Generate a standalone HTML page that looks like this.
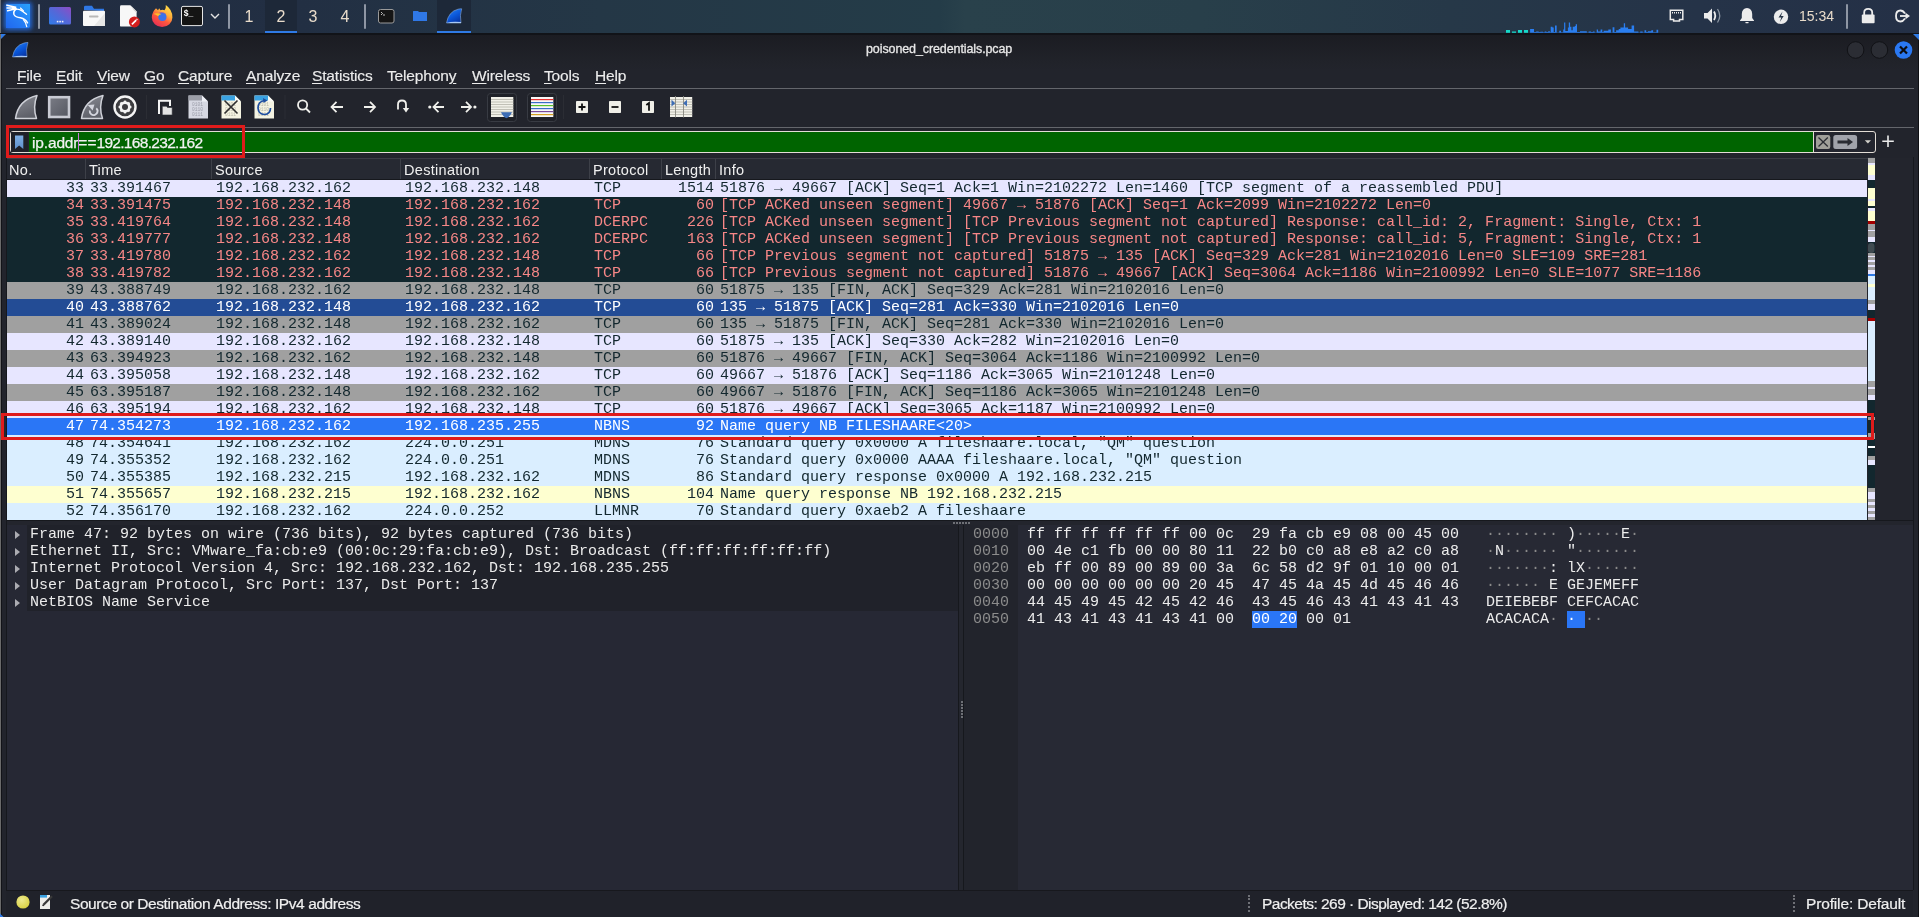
<!DOCTYPE html>
<html><head><meta charset="utf-8"><title>poisoned_credentials.pcap</title>
<style>
html,body{margin:0;padding:0;}
body{will-change:transform;width:1919px;height:917px;overflow:hidden;position:relative;background:#111318;font-family:"Liberation Sans",sans-serif;color:#e6e6e6;}
.abs{position:absolute;}
/* taskbar */
#taskbar{position:absolute;left:0;top:0;width:1919px;height:33px;background:linear-gradient(90deg,#212c41 0px,#222f43 300px,#243746 600px,#243c48 940px,#29414b 965px,#283f4a 1200px,#263848 1450px,#253348 1700px,#243046 1919px);}
#tbline{position:absolute;left:0;top:33px;width:1919px;height:2px;background:#111318;}
.tsep{position:absolute;top:4px;width:2px;height:25px;background:#8d96a3;border-radius:1px;}
.ws{position:absolute;top:0;height:33px;width:32px;text-align:center;font-size:16px;line-height:33px;color:#e9dccb;}
.ws.act{background:#1d2838;}
.ws.act::after{content:"";position:absolute;left:0;bottom:0;width:100%;height:3px;background:#2f7ae5;}
/* window */
#win{position:absolute;left:0;top:35px;width:1918px;height:882px;background:linear-gradient(180deg,#1b1c22 0px,#21232a 28px,#22242c 36px);border-radius:4px 4px 0 0;}
#wborderL{position:absolute;left:0;top:34px;width:1px;height:883px;background:#6a6a6a;}
#wborderL1{position:absolute;left:1px;top:35px;width:1px;height:882px;background:#121318;}
#wborderL2{position:absolute;left:6px;top:157px;width:1px;height:733px;background:#16181d;}
#wborderR{position:absolute;left:1918px;top:35px;width:1px;height:882px;background:#0f1014;}
#pframeR{position:absolute;left:1913px;top:157px;width:1px;height:733px;background:#16181d;}
#title{position:absolute;left:866px;top:34px;height:32px;font-size:12.5px;letter-spacing:-0.1px;line-height:31px;-webkit-text-stroke:0.3px #e8e8e8;color:#e8e8e8;white-space:pre;}
.wbtn{position:absolute;top:41px;width:17px;height:17px;border-radius:50%;background:#2c2f37;border:1px solid #121318;box-sizing:border-box;}
/* menu */
.menu{position:absolute;top:66px;height:22px;font-size:15.5px;letter-spacing:-0.15px;-webkit-text-stroke:0.15px #ececec;line-height:20px;color:#ececec;}
.menu u{text-decoration:underline;text-decoration-thickness:1px;text-underline-offset:2px;}
.hline{position:absolute;left:6px;width:1908px;height:1px;background:#64666c;}
/* toolbar */
.tbtn{position:absolute;}
.tsep2{position:absolute;top:95px;width:1px;height:24px;background:#2c2e35;}
/* filter */
#fframe{position:absolute;left:10px;top:131px;width:1866px;height:22px;border:1px solid #e3ddd6;border-radius:3px;box-sizing:border-box;background:#23252e;}
#fgreen{position:absolute;left:29px;top:132px;width:1784px;height:20px;background:#006400;}
#ftext{position:absolute;left:32px;top:133px;-webkit-text-stroke:0.25px #f2f2f2;height:20px;font-size:15.5px;letter-spacing:-0.56px;line-height:20px;color:#f2f2f2;white-space:pre;}
#fdiv{position:absolute;left:1813px;top:132px;width:1px;height:20px;background:#e3ddd6;}
/* packet list */
#plhdr{position:absolute;left:7px;top:158px;width:1906px;height:21px;background:#262932;border-top:1px solid #3a3d45;box-sizing:border-box;}
#plhdrline{position:absolute;left:7px;top:179px;width:1860px;height:1px;background:#16181d;}
.hcol{position:absolute;top:160px;height:21px;font-size:14.5px;letter-spacing:0.3px;line-height:21px;color:#f0f0f0;}
.hsep{position:absolute;top:159px;width:1px;height:20px;background:#3d4048;}
#plist{position:absolute;left:7px;top:180px;width:1860px;height:340px;overflow:hidden;background:#daeeff;}
.row{position:absolute;left:0;width:1860px;height:17px;font-family:"Liberation Mono",monospace;font-size:15px;line-height:17px;white-space:pre;color:#12272e;}
.row span{position:absolute;top:0;}
.cno{right:1783px;}
.ct{left:83px;}
.cs{left:209px;}
.cd{left:398px;}
.cp{left:587px;}
.cl{right:1153px;}
.ci{left:713px;}
.tcp{background:#e7e6ff;}
.bad{background:#12272e;color:#f78787;}
.fin{background:#a0a0a0;}
.sel2{background:#234c95;color:#ffffff;}
.sel{background:#2a76f6;color:#ffffff;}
.udp{background:#daeeff;}
.smb{background:#feffd0;}
#minimap{position:absolute;left:1867px;top:157px;width:8px;height:363px;background:#12272e;}
#minimap div{position:absolute;left:0;width:8px;}
#plright{position:absolute;left:1875px;top:158px;width:38px;height:362px;background:#23252d;}
/* splitter */
#split{position:absolute;left:7px;top:520px;width:1906px;height:6px;background:#23252d;border-top:1px solid #16181d;border-bottom:1px solid #16181d;box-sizing:border-box;}
/* detail */
#detail{position:absolute;left:7px;top:525px;width:951px;height:365px;background:#262834;}
#dtop{position:absolute;left:20px;top:0;width:931px;height:86px;background:#20222a;}
.drow{position:absolute;margin-top:1px;left:0;width:951px;height:17px;font-family:"Liberation Mono",monospace;font-size:15px;line-height:17px;white-space:pre;color:#ebebeb;}
.darr{position:absolute;left:8px;top:4.5px;width:0;height:0;border-left:5px solid #acacb2;border-top:4px solid transparent;border-bottom:4px solid transparent;}
.dtxt{position:absolute;left:23px;top:0;}
/* hex */
#hex{position:absolute;left:958px;top:525px;width:955px;height:365px;background:#272934;}
#hexgap{position:absolute;left:0;top:0;width:6px;height:365px;background:#24262e;border-left:1px solid #16181d;border-right:1px solid #16181d;box-sizing:border-box;}
#hexoff{position:absolute;left:6px;top:0;width:54px;height:365px;background:#22242c;}
.hrow{position:absolute;margin-top:1px;left:0;width:955px;height:17px;font-family:"Liberation Mono",monospace;font-size:15px;line-height:17px;white-space:pre;color:#ececec;}
.hrow span{position:absolute;top:0;}
.hoff{left:15px;color:#8c8c8c;}
.hx1{left:69px;}
.hx2{left:294px;}
.ha1{left:528px;}
.ha2{left:609px;}
.hrow i{font-style:normal;color:#8a8a8a;}
.hrow b{font-weight:normal;}
.hl{background:#2a76f6;color:#fff;}
.hl i{color:#fff !important;}
/* status */
#status{position:absolute;left:6px;top:890px;width:1907px;height:27px;background:#20222a;border-top:1px solid #17181d;box-sizing:border-box;}
.stxt{position:absolute;top:894px;-webkit-text-stroke:0.2px #f0f0f0;height:20px;font-size:15.5px;line-height:20px;color:#f0f0f0;white-space:pre;}
.sdots{position:absolute;top:895px;width:0;height:17px;border-left:2px dotted #6f7177;}
/* annotations */
.red{position:absolute;border:3px solid #e01b1b;box-sizing:border-box;}

</style></head>
<body>
<div id="taskbar"></div>
<div id="tbline"></div>
<svg class="abs" style="left:0;top:0" width="1919" height="33" viewBox="0 0 1919 33">
<defs>
<linearGradient id="kg" x1="0" y1="1" x2="1" y2="0"><stop offset="0" stop-color="#2068f0"/><stop offset="0.5" stop-color="#2680f6"/><stop offset="1" stop-color="#28a2fc"/></linearGradient>
<linearGradient id="dg" x1="0" y1="1" x2="1" y2="0"><stop offset="0" stop-color="#2f7cea"/><stop offset="0.5" stop-color="#5468d8"/><stop offset="1" stop-color="#8e4cc4"/></linearGradient>
<radialGradient id="ffg" cx="0.6" cy="0.25" r="0.8"><stop offset="0" stop-color="#ffe14a"/><stop offset="0.45" stop-color="#ff8a2a"/><stop offset="1" stop-color="#e8244a"/></radialGradient>
<filter id="glow" x="-50%" y="-50%" width="200%" height="200%"><feGaussianBlur stdDeviation="2.2"/></filter>
</defs>
<rect x="0" y="0" width="1" height="33" fill="#6f737a"/>
<!-- kali -->
<rect x="4" y="2" width="28" height="28" rx="4" fill="#2477ff" opacity="0.75" filter="url(#glow)"/>
<path d="M6 4 H30 V26 Q30 28 28 28 H6 Z" fill="url(#kg)"/>
<g fill="none" stroke="#ffffff" stroke-linecap="round">
<path d="M6.8 5.2 L15.8 7.2 M7 8 L15.5 8 M7.6 10.8 L15.8 8.8" stroke-width="1.4"/>
<path d="M16.2 9 Q13 11 14 14.5 Q15.5 17.5 20.5 17.8 Q25.5 18.8 27.5 22.8" stroke-width="1.5"/>
<path d="M23.5 19.8 Q26.2 22.5 26.7 26.5" stroke-width="1.3"/>
<path d="M15.8 9.2 Q19.5 8.8 22.5 11.3 L26.5 14.3" stroke-width="1.4"/>
<path d="M20.5 8 L23.5 11" stroke-width="1.1"/>
</g>
<rect x="38" y="4" width="2" height="25" rx="1" fill="#8e96a4"/>
<!-- desktop -->
<rect x="49" y="7" width="22" height="17.5" rx="1.5" fill="url(#dg)"/>
<rect x="56.8" y="20.8" width="1.6" height="1.6" fill="#f0f0fa"/><rect x="59.3" y="20.8" width="1.6" height="1.6" fill="#f0f0fa"/><rect x="61.8" y="20.8" width="1.6" height="1.6" fill="#f0f0fa"/>
<!-- folder -->
<path d="M84 10 V7 Q84 5.7 85.5 5.7 H92 L94 8.7 H104 V11 Z" fill="#2f78e6"/>
<rect x="83" y="10.8" width="22" height="15.2" rx="1" fill="#f8f8f8"/>
<path d="M94 26 L105 13 V26 Z" fill="#e6e6e6"/>
<rect x="89" y="15.6" width="9.5" height="1.8" rx="0.9" fill="#b8b8b8"/>
<!-- text editor -->
<path d="M120 6.5 Q120 5.3 121.3 5.3 H130.3 L136.6 11.6 V25.4 Q136.6 26.6 135.4 26.6 H121.3 Q120 26.6 120 25.4 Z" fill="#f7f7f7"/>
<path d="M130.6 5.3 L136.6 11.3 V13 Q133 10 130.6 5.3 Z" fill="#d0d0d0"/>
<circle cx="134.4" cy="21.9" r="5.5" fill="#d41d1d"/>
<path d="M131.9 24.4 L136.2 20.1" stroke="#ffffff" stroke-width="1.7"/><path d="M136.6 19.7 L137.3 19" stroke="#ffffff" stroke-width="1.5"/>
<!-- firefox -->
<defs><linearGradient id="ffg2" x1="0.8" y1="0" x2="0.2" y2="1"><stop offset="0" stop-color="#ffe04a"/><stop offset="0.35" stop-color="#ffae3a"/><stop offset="0.6" stop-color="#ff5a3c"/><stop offset="1" stop-color="#e42a58"/></linearGradient></defs>
<path d="M151.8 17.5 A10.3 9.5 0 0 0 172.4 17.5 Q172.5 9.5 165.8 5 Q166.2 8.8 164.5 10.3 Q162.5 9.5 160.5 10.2 L159.2 8.3 L158 10.2 L156 8.3 Q152 12 151.8 17.5 Z" fill="url(#ffg2)"/>
<circle cx="162.4" cy="17" r="4.1" fill="#3a72ea"/>
<path d="M158.4 12.8 Q161 11.8 163.6 12.6 Q165.5 13.3 166.2 14.5 Q164 12.9 161.8 13.3 Z" fill="#6a4ad0" opacity="0.8"/>
<path d="M153.2 14 Q156.5 12.5 161.2 14.2 Q158.8 14.6 158 16.2 Q156.2 14.6 153.2 14 Z" fill="#ffc02a"/>
<!-- terminal -->
<rect x="181.5" y="6.4" width="21" height="19.2" rx="1.5" fill="#141414" stroke="#e6e6e6" stroke-width="1"/>
<text x="183.8" y="15.6" font-family="Liberation Sans" font-weight="bold" font-size="8.5" fill="#ffffff">$_</text>
<path d="M211 14 L215 18 L219 14" fill="none" stroke="#e4e4e4" stroke-width="1.4"/>
<rect x="228" y="4" width="2" height="25" rx="1" fill="#8e96a4"/>
<!-- workspaces -->
<rect x="265" y="0" width="32" height="33" fill="#1d2838"/>
<rect x="265" y="31" width="32" height="2" fill="#2f7ae5"/>
<rect x="364" y="4" width="2" height="25" rx="1" fill="#8e96a4"/>
<!-- window buttons -->
<rect x="378.5" y="9.5" width="15.5" height="13.5" rx="2" fill="#151515" stroke="#9a9a9a" stroke-width="1"/>
<path d="M381 12 L382.5 13.5 L381 15 M383 15 H385" stroke="#e8e8e8" stroke-width="0.8" fill="none"/>
<path d="M413 11.5 Q413 11 413.5 11 H418 L419 12 H427 V21 H413 Z" fill="#2f78e6"/>
<rect x="437" y="0" width="34" height="33" fill="#1d2838"/>
<rect x="437" y="31" width="34" height="2" fill="#2f7ae5"/>
<!-- wireshark fin -->
<defs><linearGradient id="wsg" x1="0" y1="0" x2="0.6" y2="1"><stop offset="0" stop-color="#2a86f5"/><stop offset="0.6" stop-color="#0a56d8"/><stop offset="1" stop-color="#0838a8"/></linearGradient></defs>
<path d="M446.5 23 Q448.5 11.5 458 9.2 Q460.5 8.6 461.7 8.8 Q459.5 15 461 23 Z" fill="url(#wsg)" stroke="#9cc0f0" stroke-width="0.5"/>
<path d="M446.6 23 Q452 21 461 22 V23 Z" fill="#a8c8f4"/>
<!-- network graph -->
<g fill="#16d9c9">
<rect x="1506" y="30" width="4" height="2.8"/><rect x="1512" y="31.5" width="4" height="1.3"/><rect x="1518" y="30" width="4" height="2.8"/><rect x="1524" y="30" width="4" height="2.8"/>
</g>
<path fill="#2a7ef0" d="M1530.1 32.8V28.9H1534.0V32.8ZM1534.0 32.8V31.9H1536.1V32.8ZM1536.1 32.8V31.5H1538.7V32.8ZM1538.7 32.8V32.1H1540.4V32.8ZM1540.4 32.8V31.8H1543.0V32.8ZM1543.0 32.8V32.3H1544.7V32.8ZM1544.7 32.8V31.6H1546.4V32.8ZM1546.4 32.8V32.1H1548.2V32.8ZM1548.2 32.8V31.3H1549.9V32.8ZM1549.9 32.8V32.3H1550.7V32.8ZM1550.7 32.8V26.8H1552.5V32.8ZM1552.5 32.8V27.6H1553.7V32.8ZM1553.7 32.8V31.9H1555.0V32.8ZM1555.0 32.8V25.5H1556.7V32.8ZM1556.7 32.8V32.4H1559.3V32.8ZM1559.3 32.8V30.7H1561.0V32.8ZM1561.0 32.8V32.3H1563.2V32.8ZM1563.2 32.8V29.4H1564.1V32.8ZM1564.1 32.8V22.5H1565.3V32.8ZM1565.3 32.8V31.1H1567.9V32.8ZM1567.9 32.8V27.6H1568.8V32.8ZM1568.8 32.8V22.5H1570.1V32.8ZM1570.1 32.8V26.8H1571.4V32.8ZM1571.4 32.8V30.2H1572.7V32.8ZM1572.7 32.8V26.8H1574.8V32.8ZM1574.8 32.8V25.9H1575.7V32.8ZM1575.7 32.8V24.2H1577.0V32.8ZM1577.0 32.8V31.9H1580.0V32.8ZM1580.0 32.8V31.3H1586.8V32.8ZM1586.8 32.8V32.4H1588.6V32.8ZM1588.6 32.8V31.5H1591.1V32.8ZM1591.1 32.8V32.1H1592.9V32.8ZM1592.9 32.8V31.5H1594.6V32.8ZM1594.6 32.8V32.4H1596.7V32.8ZM1596.7 32.8V29.4H1598.0V32.8ZM1598.0 32.8V31.5H1600.6V32.8ZM1600.6 32.8V29.4H1602.3V32.8ZM1602.3 32.8V32.1H1603.6V32.8ZM1603.6 32.8V30.7H1608.3V32.8ZM1608.3 32.8V29.4H1610.9V32.8ZM1610.9 32.8V32.4H1612.6V32.8ZM1612.6 32.8V27.2H1614.4V32.8ZM1614.4 32.8V32.1H1616.1V32.8ZM1616.1 32.8V30.2H1618.7V32.8ZM1618.7 32.8V28.9H1620.4V32.8ZM1620.4 32.8V27.6H1623.8V32.8ZM1623.8 32.8V23.3H1625.1V32.8ZM1625.1 32.8V27.6H1628.1V32.8ZM1628.1 32.8V28.9H1631.6V32.8ZM1631.6 32.8V25.5H1634.1V32.8ZM1634.1 32.8V31.5H1635.9V32.8ZM1635.9 32.8V31.5H1638.4V32.8ZM1638.4 32.8V32.4H1640.2V32.8ZM1640.2 32.8V31.5H1642.7V32.8ZM1642.7 32.8V32.4H1644.5V32.8ZM1644.5 32.8V30.2H1646.2V32.8ZM1646.2 32.8V31.9H1647.9V32.8ZM1647.9 32.8V31.3H1651.3V32.8ZM1651.3 32.8V30.2H1653.1V32.8ZM1653.1 32.8V32.3H1656.5V32.8ZM1656.5 32.8V29.8H1658.2V32.8Z"/>
<!-- tray -->
<g fill="none" stroke="#ececec" stroke-width="1.5">
<path d="M1670.3 10.2 H1682.8 V19.5 H1679.5 V21 H1673.6 V19.5 H1670.3 Z"/>
</g>
<path d="M1672.5 12 V13.5 M1674.5 12 V13.5 M1676.5 12 V13.5 M1678.5 12 V13.5 M1680.5 12 V13.5" stroke="#ececec" stroke-width="1"/>
<path d="M1704 13 H1707.5 L1712 8.5 V23 L1707.5 18.5 H1704 Z" fill="#ececec"/>
<path d="M1714 11.5 Q1716.5 15.7 1714 20" fill="none" stroke="#ececec" stroke-width="1.8"/>
<path d="M1717.5 9 Q1722 15.7 1717.5 22.5" fill="none" stroke="#8c96a2" stroke-width="1.3"/>
<path d="M1747 8 Q1742 8.5 1741.8 14 V18 L1740 20.5 V21 H1754 V20.5 L1752.2 18 V14 Q1752 8.5 1747 8 Z" fill="#ececec"/>
<rect x="1745.3" y="22" width="3.4" height="1.2" rx="0.6" fill="#ececec"/>
<circle cx="1781" cy="16.8" r="7.2" fill="#ececec"/>
<path d="M1782.5 11.5 L1778.5 17.5 H1781.3 L1779.8 22 L1783.7 16 H1781 Z" fill="#263446"/>
<rect x="1846" y="4" width="2" height="25" rx="1" fill="#8e96a4"/>
<path d="M1864.2 15 V12.5 Q1864.2 8.8 1868.2 8.8 Q1872.2 8.8 1872.2 12.5 V15" fill="none" stroke="#ececec" stroke-width="1.8"/>
<rect x="1861.8" y="14.5" width="12.8" height="8.7" rx="1" fill="#ececec"/>
<path d="M1905 13.5 Q1903 10.5 1900.5 10.5 Q1896 10.5 1896 16 Q1896 21.5 1900.5 21.5 Q1903 21.5 1905 18.5" fill="none" stroke="#ececec" stroke-width="1.8"/>
<path d="M1900 16 H1906.5" stroke="#ececec" stroke-width="1.8"/>
<path d="M1905.5 12.8 L1910 16 L1905.5 19.2 Z" fill="#ececec"/>
</svg>

<div class="ws" style="left:233px">1</div>
<div class="ws" style="left:265px">2</div>
<div class="ws" style="left:297px">3</div>
<div class="ws" style="left:329px">4</div>
<div class="abs" style="left:1799px;top:5px;font-size:14px;line-height:22px;color:#e9dccb;">15:34</div>

<div id="win"></div>
<div id="wborderL"></div>
<div id="wborderL1"></div>
<div id="wborderL2"></div>
<div id="wborderR"></div>
<div id="pframeR"></div>
<div id="title">poisoned_credentials.pcap</div>

<div class="menu" style="left:17px"><u>F</u>ile</div>
<div class="menu" style="left:56px"><u>E</u>dit</div>
<div class="menu" style="left:97px"><u>V</u>iew</div>
<div class="menu" style="left:144px"><u>G</u>o</div>
<div class="menu" style="left:178px"><u>C</u>apture</div>
<div class="menu" style="left:246px"><u>A</u>nalyze</div>
<div class="menu" style="left:312px"><u>S</u>tatistics</div>
<div class="menu" style="left:387px">Telephon<u>y</u></div>
<div class="menu" style="left:472px"><u>W</u>ireless</div>
<div class="menu" style="left:544px"><u>T</u>ools</div>
<div class="menu" style="left:595px"><u>H</u>elp</div>
<div class="hline" style="top:88px"></div>
<div class="hline" style="top:127px"></div>
<svg class="abs" style="left:0;top:88px" width="1919" height="40" viewBox="0 88 1919 40">
<defs>
<linearGradient id="fing" x1="0" y1="0" x2="0.3" y2="1"><stop offset="0" stop-color="#8a8c94"/><stop offset="1" stop-color="#5e6069"/></linearGradient>
<linearGradient id="sqg" x1="0" y1="0" x2="1" y2="1"><stop offset="0" stop-color="#7a7c85"/><stop offset="1" stop-color="#555862"/></linearGradient>
</defs>
<!-- fin 1 -->
<path d="M15.5 118.5 Q18 100 37 95.5 Q32.5 107 36.5 118.5 Z" fill="url(#fing)" stroke="#cfd1d8" stroke-width="1.5" stroke-linejoin="round"/>
<!-- square -->
<rect x="49.2" y="97.2" width="19.8" height="19.8" fill="url(#sqg)" stroke="#c9cbd4" stroke-width="2.6"/>
<!-- fin 3 -->
<path d="M81.5 118.5 Q84 100 103 95.5 Q98.5 107 102.5 118.5 Z" fill="url(#fing)" stroke="#cfd1d8" stroke-width="1.5" stroke-linejoin="round"/>
<path d="M96.3 108.3 A3.9 3.9 0 1 1 89.8 110.5" fill="none" stroke="#d4d6de" stroke-width="1.9"/>
<path d="M87.8 105 L94.5 104.6 L92.6 110.6 Z" fill="#d4d6de"/>
<!-- gear -->
<circle cx="125" cy="107" r="10.5" fill="#3c3c3f" stroke="#f4f4f4" stroke-width="2.4"/>
<g fill="#f4f4f4">
<circle cx="125" cy="107" r="5.7"/>
<rect x="123.9" y="100.6" width="2.2" height="2.4" transform="rotate(0 125 107)"/><rect x="123.9" y="100.6" width="2.2" height="2.4" transform="rotate(45 125 107)"/><rect x="123.9" y="100.6" width="2.2" height="2.4" transform="rotate(90 125 107)"/><rect x="123.9" y="100.6" width="2.2" height="2.4" transform="rotate(135 125 107)"/><rect x="123.9" y="100.6" width="2.2" height="2.4" transform="rotate(180 125 107)"/><rect x="123.9" y="100.6" width="2.2" height="2.4" transform="rotate(225 125 107)"/><rect x="123.9" y="100.6" width="2.2" height="2.4" transform="rotate(270 125 107)"/><rect x="123.9" y="100.6" width="2.2" height="2.4" transform="rotate(315 125 107)"/>
</g>
<circle cx="125" cy="107" r="3" fill="#3c3c3f"/>
<rect x="146" y="95" width="1" height="24" fill="#2b2d34"/>
<!-- open -->
<path d="M159 114 V100.8 H170 V106" fill="none" stroke="#f4f4f4" stroke-width="2"/>
<path d="M162.3 106.2 H166.5 L167.5 107.5 H172.2 V115 H162.3 Z" fill="#e4e4e4" stroke="#2a2c33" stroke-width="0.6"/>
<!-- file 0101 -->
<path d="M188.5 95.5 H202 L208 101.5 V118.5 H188.5 Z" fill="#d6d8e2"/>
<path d="M188.5 95.5 H202 L204 97.5 V100.5 H188.5 Z" fill="#9c9ea8"/>
<path d="M202 95.5 V101.5 H208 Z" fill="#eef0f6"/>
<text x="192" y="106" font-family="Liberation Mono" font-size="4.6" fill="#9a9ca8">0101</text>
<text x="192" y="111" font-family="Liberation Mono" font-size="4.6" fill="#9a9ca8">0110</text>
<text x="192" y="116" font-family="Liberation Mono" font-size="4.6" fill="#9a9ca8">0111</text>
<!-- file X -->
<path d="M221.5 95.5 H235 L241 101.5 V118.5 H221.5 Z" fill="#f4f3e2"/>
<path d="M221.5 95.5 H235 L237 97.5 V100.5 H221.5 Z" fill="#3aa2e2"/>
<path d="M235 95.5 V101.5 H241 Z" fill="#fbfbf6"/>
<text x="225" y="106" font-family="Liberation Mono" font-size="4.6" fill="#b8b8a8">0101</text>
<text x="225" y="111" font-family="Liberation Mono" font-size="4.6" fill="#b8b8a8">0110</text>
<text x="225" y="116" font-family="Liberation Mono" font-size="4.6" fill="#b8b8a8">0111</text>
<path d="M224.5 100.5 L237.5 113.5 M237.5 100.5 L224.5 113.5" stroke="#2e2e2e" stroke-width="1.6"/>
<!-- file reload -->
<path d="M254.5 95.5 H268 L274 101.5 V118.5 H254.5 Z" fill="#f4f3e2"/>
<path d="M254.5 95.5 H268 L270 97.5 V100.5 H254.5 Z" fill="#3aa2e2"/>
<path d="M268 95.5 V101.5 H274 Z" fill="#fbfbf6"/>
<text x="258" y="106" font-family="Liberation Mono" font-size="4.6" fill="#b8b8a8">0101</text>
<text x="258" y="111" font-family="Liberation Mono" font-size="4.6" fill="#b8b8a8">0110</text>
<text x="258" y="116" font-family="Liberation Mono" font-size="4.6" fill="#b8b8a8">0111</text>
<path d="M264.5 100.5 Q258 101.5 258 108 Q258.5 114.5 264.5 114.5 Q270.5 114 270.5 108" fill="none" stroke="#1e4ea0" stroke-width="1.7"/>
<path d="M263 98 L267.5 100.5 L263.5 103 Z" fill="#1e4ea0"/>
<rect x="284.5" y="95" width="1" height="24" fill="#2b2d34"/>
<!-- nav -->
<g fill="none" stroke="#f0f0ec" stroke-width="1.8" stroke-linecap="butt">
<circle cx="302.6" cy="105" r="4.6"/>
<path d="M306 108.5 L310 112.5"/>
<path d="M336.5 101.8 L331.5 107 L336.5 112.2 M332 107 H343"/>
<path d="M370 101.8 L375 107 L370 112.2 M374.5 107 H364"/>
<path d="M398 109.5 V104.5 Q398 100.5 402 100.5 Q406 100.5 406 104.5 V108"/>
<path d="M438.5 101.8 L433.5 107 L438.5 112.2 M434 107 H444"/>
<path d="M466 101.8 L471 107 L466 112.2 M470.5 107 H461"/>
</g>
<path d="M402.8 108 L409.2 108 L406 112.5 Z" fill="#f0f0ec"/>
<circle cx="429.8" cy="107" r="1.6" fill="#f0f0ec"/>
<circle cx="474.9" cy="107" r="1.6" fill="#f0f0ec"/>
<!-- toggle buttons -->
<rect x="487.5" y="93.5" width="29" height="28" rx="3" fill="#1f2128" stroke="#383b43" stroke-width="1"/>
<rect x="491" y="97" width="22.3" height="20" fill="#f1f0e8"/>
<g stroke="#b5b4a8" stroke-width="0.8">
<path d="M491 99.5 H513.3 M491 102 H513.3 M491 104.5 H513.3 M491 107 H513.3 M491 109.5 H513.3 M491 112 H513.3 M491 114.5 H513.3"/>
</g>
<path d="M501 112.3 H512 Q510 117 506.5 118.3 Q503 117 501 112.3 Z" fill="#3d6db5"/>
<rect x="527.5" y="93.5" width="29" height="28" rx="3" fill="#1f2128" stroke="#383b43" stroke-width="1"/>
<rect x="531" y="97" width="22.3" height="20" fill="#f8f8f8"/>
<rect x="531" y="99" width="22.3" height="1.2" fill="#e83030"/>
<rect x="531" y="102" width="22.3" height="1.2" fill="#3a6ec8"/>
<rect x="531" y="105" width="22.3" height="1.2" fill="#5ac02a"/>
<rect x="531" y="108" width="22.3" height="1.2" fill="#3a6ec8"/>
<rect x="531" y="111" width="22.3" height="1.2" fill="#7a4a9a"/>
<rect x="531" y="114" width="22.3" height="1.2" fill="#d4a020"/>
<rect x="563" y="95" width="1" height="24" fill="#2b2d34"/>
<!-- zoom -->
<rect x="576" y="101" width="12" height="12" rx="0.8" fill="#f0efe8"/>
<path d="M582 103.5 V110.5 M578.5 107 H585.5" stroke="#111" stroke-width="1.8"/>
<rect x="609" y="101" width="12" height="12" rx="0.8" fill="#f0efe8"/>
<path d="M611.5 107 H618.5" stroke="#111" stroke-width="1.8"/>
<rect x="642" y="101" width="12" height="12" rx="0.8" fill="#f0efe8"/>
<path d="M646.3 105 L649 103 V110.8" stroke="#111" stroke-width="1.8" fill="none"/>
<!-- resize cols -->
<rect x="670" y="97" width="22.2" height="20" fill="#f1f0e8"/>
<g stroke="#b5b4a8" stroke-width="0.8">
<path d="M670 99.5 H692.2 M670 102 H692.2 M670 104.5 H692.2 M670 107 H692.2 M670 109.5 H692.2 M670 112 H692.2 M670 114.5 H692.2"/>
</g>
<path d="M675.5 96 V117.5 M683.5 96 V117.5" stroke="#888880" stroke-width="0.9"/>
<path d="M671.5 99.8 L675.3 103.2 L671.5 106.6 Z" fill="#3d6db5"/>
<path d="M687 99.8 L683.2 103.2 L687 106.6 Z" fill="#3d6db5"/>
</svg>


<!-- filter -->
<div id="fframe"></div>
<div class="abs" style="left:11px;top:132px;width:17px;height:20px;background:#1f2129;"></div>
<div id="fgreen"></div>
<div id="fdiv"></div>
<div id="ftext"><span style="letter-spacing:-0.15px">ip.addr</span><span style="letter-spacing:0">==</span><span style="letter-spacing:-0.69px">192.168.232.162</span></div>
<div class="abs" style="left:78px;top:133px;width:1px;height:18px;background:#c77ad8;"></div>

<!-- packet list header -->
<div id="plhdr"></div>
<div class="hcol" style="left:9px">No.</div>
<div class="hsep" style="left:85px"></div>
<div class="hcol" style="left:89px">Time</div>
<div class="hsep" style="left:211px"></div>
<div class="hcol" style="left:215px">Source</div>
<div class="hsep" style="left:400px"></div>
<div class="hcol" style="left:404px">Destination</div>
<div class="hsep" style="left:589px"></div>
<div class="hcol" style="left:593px">Protocol</div>
<div class="hsep" style="left:661px"></div>
<div class="hcol" style="left:665px">Length</div>
<div class="hsep" style="left:715px"></div>
<div class="hcol" style="left:719px">Info</div>
<div id="plhdrline"></div>
<div id="plist">
<div class="row tcp" style="top:0px"><span class="cno">33</span><span class="ct">33.391467</span><span class="cs">192.168.232.162</span><span class="cd">192.168.232.148</span><span class="cp">TCP</span><span class="cl">1514</span><span class="ci">51876 → 49667 [ACK] Seq=1 Ack=1 Win=2102272 Len=1460 [TCP segment of a reassembled PDU]</span></div>
<div class="row bad" style="top:17px"><span class="cno">34</span><span class="ct">33.391475</span><span class="cs">192.168.232.148</span><span class="cd">192.168.232.162</span><span class="cp">TCP</span><span class="cl">60</span><span class="ci">[TCP ACKed unseen segment] 49667 → 51876 [ACK] Seq=1 Ack=2099 Win=2102272 Len=0</span></div>
<div class="row bad" style="top:34px"><span class="cno">35</span><span class="ct">33.419764</span><span class="cs">192.168.232.148</span><span class="cd">192.168.232.162</span><span class="cp">DCERPC</span><span class="cl">226</span><span class="ci">[TCP ACKed unseen segment] [TCP Previous segment not captured] Response: call_id: 2, Fragment: Single, Ctx: 1</span></div>
<div class="row bad" style="top:51px"><span class="cno">36</span><span class="ct">33.419777</span><span class="cs">192.168.232.148</span><span class="cd">192.168.232.162</span><span class="cp">DCERPC</span><span class="cl">163</span><span class="ci">[TCP ACKed unseen segment] [TCP Previous segment not captured] Response: call_id: 5, Fragment: Single, Ctx: 1</span></div>
<div class="row bad" style="top:68px"><span class="cno">37</span><span class="ct">33.419780</span><span class="cs">192.168.232.162</span><span class="cd">192.168.232.148</span><span class="cp">TCP</span><span class="cl">66</span><span class="ci">[TCP Previous segment not captured] 51875 → 135 [ACK] Seq=329 Ack=281 Win=2102016 Len=0 SLE=109 SRE=281</span></div>
<div class="row bad" style="top:85px"><span class="cno">38</span><span class="ct">33.419782</span><span class="cs">192.168.232.162</span><span class="cd">192.168.232.148</span><span class="cp">TCP</span><span class="cl">66</span><span class="ci">[TCP Previous segment not captured] 51876 → 49667 [ACK] Seq=3064 Ack=1186 Win=2100992 Len=0 SLE=1077 SRE=1186</span></div>
<div class="row fin" style="top:102px"><span class="cno">39</span><span class="ct">43.388749</span><span class="cs">192.168.232.162</span><span class="cd">192.168.232.148</span><span class="cp">TCP</span><span class="cl">60</span><span class="ci">51875 → 135 [FIN, ACK] Seq=329 Ack=281 Win=2102016 Len=0</span></div>
<div class="row sel2" style="top:119px"><span class="cno">40</span><span class="ct">43.388762</span><span class="cs">192.168.232.148</span><span class="cd">192.168.232.162</span><span class="cp">TCP</span><span class="cl">60</span><span class="ci">135 → 51875 [ACK] Seq=281 Ack=330 Win=2102016 Len=0</span></div>
<div class="row fin" style="top:136px"><span class="cno">41</span><span class="ct">43.389024</span><span class="cs">192.168.232.148</span><span class="cd">192.168.232.162</span><span class="cp">TCP</span><span class="cl">60</span><span class="ci">135 → 51875 [FIN, ACK] Seq=281 Ack=330 Win=2102016 Len=0</span></div>
<div class="row tcp" style="top:153px"><span class="cno">42</span><span class="ct">43.389140</span><span class="cs">192.168.232.162</span><span class="cd">192.168.232.148</span><span class="cp">TCP</span><span class="cl">60</span><span class="ci">51875 → 135 [ACK] Seq=330 Ack=282 Win=2102016 Len=0</span></div>
<div class="row fin" style="top:170px"><span class="cno">43</span><span class="ct">63.394923</span><span class="cs">192.168.232.162</span><span class="cd">192.168.232.148</span><span class="cp">TCP</span><span class="cl">60</span><span class="ci">51876 → 49667 [FIN, ACK] Seq=3064 Ack=1186 Win=2100992 Len=0</span></div>
<div class="row tcp" style="top:187px"><span class="cno">44</span><span class="ct">63.395058</span><span class="cs">192.168.232.148</span><span class="cd">192.168.232.162</span><span class="cp">TCP</span><span class="cl">60</span><span class="ci">49667 → 51876 [ACK] Seq=1186 Ack=3065 Win=2101248 Len=0</span></div>
<div class="row fin" style="top:204px"><span class="cno">45</span><span class="ct">63.395187</span><span class="cs">192.168.232.148</span><span class="cd">192.168.232.162</span><span class="cp">TCP</span><span class="cl">60</span><span class="ci">49667 → 51876 [FIN, ACK] Seq=1186 Ack=3065 Win=2101248 Len=0</span></div>
<div class="row tcp" style="top:221px"><span class="cno">46</span><span class="ct">63.395194</span><span class="cs">192.168.232.162</span><span class="cd">192.168.232.148</span><span class="cp">TCP</span><span class="cl">60</span><span class="ci">51876 → 49667 [ACK] Seq=3065 Ack=1187 Win=2100992 Len=0</span></div>
<div class="row sel" style="top:238px"><span class="cno">47</span><span class="ct">74.354273</span><span class="cs">192.168.232.162</span><span class="cd">192.168.235.255</span><span class="cp">NBNS</span><span class="cl">92</span><span class="ci">Name query NB FILESHAARE&lt;20&gt;</span></div>
<div class="row udp" style="top:255px"><span class="cno">48</span><span class="ct">74.354641</span><span class="cs">192.168.232.162</span><span class="cd">224.0.0.251</span><span class="cp">MDNS</span><span class="cl">76</span><span class="ci">Standard query 0x0000 A fileshaare.local, &quot;QM&quot; question</span></div>
<div class="row udp" style="top:272px"><span class="cno">49</span><span class="ct">74.355352</span><span class="cs">192.168.232.162</span><span class="cd">224.0.0.251</span><span class="cp">MDNS</span><span class="cl">76</span><span class="ci">Standard query 0x0000 AAAA fileshaare.local, &quot;QM&quot; question</span></div>
<div class="row udp" style="top:289px"><span class="cno">50</span><span class="ct">74.355385</span><span class="cs">192.168.232.215</span><span class="cd">192.168.232.162</span><span class="cp">MDNS</span><span class="cl">86</span><span class="ci">Standard query response 0x0000 A 192.168.232.215</span></div>
<div class="row smb" style="top:306px"><span class="cno">51</span><span class="ct">74.355657</span><span class="cs">192.168.232.215</span><span class="cd">192.168.232.162</span><span class="cp">NBNS</span><span class="cl">104</span><span class="ci">Name query response NB 192.168.232.215</span></div>
<div class="row udp" style="top:323px"><span class="cno">52</span><span class="ct">74.356170</span><span class="cs">192.168.232.162</span><span class="cd">224.0.0.252</span><span class="cp">LLMNR</span><span class="cl">70</span><span class="ci">Standard query 0xaeb2 A fileshaare</span></div>
</div>
<div id="plright"></div>

<div id="split"></div>
<div id="detail"><div id="dtop"></div>
<div class="drow" style="top:0px"><span class="darr"></span><span class="dtxt">Frame 47: 92 bytes on wire (736 bits), 92 bytes captured (736 bits)</span></div>
<div class="drow" style="top:17px"><span class="darr"></span><span class="dtxt">Ethernet II, Src: VMware_fa:cb:e9 (00:0c:29:fa:cb:e9), Dst: Broadcast (ff:ff:ff:ff:ff:ff)</span></div>
<div class="drow" style="top:34px"><span class="darr"></span><span class="dtxt">Internet Protocol Version 4, Src: 192.168.232.162, Dst: 192.168.235.255</span></div>
<div class="drow" style="top:51px"><span class="darr"></span><span class="dtxt">User Datagram Protocol, Src Port: 137, Dst Port: 137</span></div>
<div class="drow" style="top:68px"><span class="darr"></span><span class="dtxt">NetBIOS Name Service</span></div>
</div>
<div id="hex"><div id="hexgap"></div><div id="hexoff"></div>
<div class="hrow" style="top:0px"><span class="hoff">0000</span><span class="hx1">ff ff ff ff ff ff 00 0c</span><span class="hx2">29 fa cb e9 08 00 45 00</span><span class="ha1"><i>·</i><i>·</i><i>·</i><i>·</i><i>·</i><i>·</i><i>·</i><i>·</i></span><span class="ha2">)<i>·</i><i>·</i><i>·</i><i>·</i><i>·</i>E<i>·</i></span></div>
<div class="hrow" style="top:17px"><span class="hoff">0010</span><span class="hx1">00 4e c1 fb 00 00 80 11</span><span class="hx2">22 b0 c0 a8 e8 a2 c0 a8</span><span class="ha1"><i>·</i>N<i>·</i><i>·</i><i>·</i><i>·</i><i>·</i><i>·</i></span><span class="ha2">&quot;<i>·</i><i>·</i><i>·</i><i>·</i><i>·</i><i>·</i><i>·</i></span></div>
<div class="hrow" style="top:34px"><span class="hoff">0020</span><span class="hx1">eb ff 00 89 00 89 00 3a</span><span class="hx2">6c 58 d2 9f 01 10 00 01</span><span class="ha1"><i>·</i><i>·</i><i>·</i><i>·</i><i>·</i><i>·</i><i>·</i>:</span><span class="ha2">lX<i>·</i><i>·</i><i>·</i><i>·</i><i>·</i><i>·</i></span></div>
<div class="hrow" style="top:51px"><span class="hoff">0030</span><span class="hx1">00 00 00 00 00 00 20 45</span><span class="hx2">47 45 4a 45 4d 45 46 46</span><span class="ha1"><i>·</i><i>·</i><i>·</i><i>·</i><i>·</i><i>·</i> E</span><span class="ha2">GEJEMEFF</span></div>
<div class="hrow" style="top:68px"><span class="hoff">0040</span><span class="hx1">44 45 49 45 42 45 42 46</span><span class="hx2">43 45 46 43 41 43 41 43</span><span class="ha1">DEIEBEBF</span><span class="ha2">CEFCACAC</span></div>
<div class="hrow" style="top:85px"><span class="hoff">0050</span><span class="hx1">41 43 41 43 41 43 41 00</span><span class="hx2"><b class="hl">00 20</b> 00 01</span><span class="ha1">ACACACA<i>·</i></span><span class="ha2"><b class="hl"><i>·</i> </b><i>·</i><i>·</i></span></div>
</div>

<div id="status"></div>
<div class="stxt" style="left:70px;letter-spacing:-0.42px">Source or Destination Address: IPv4 address</div>
<div class="sdots" style="left:1248px"></div>
<div class="stxt" style="left:1262px;letter-spacing:-0.53px">Packets: 269 · Displayed: 142 (52.8%)</div>
<div class="sdots" style="left:1793px"></div>
<div class="stxt" style="left:1806px;letter-spacing:-0.15px">Profile: Default</div>

<svg class="abs" style="left:0;top:0" width="1919" height="917" viewBox="0 0 1919 917">
<defs><linearGradient id="wsg2" x1="0" y1="0" x2="0.6" y2="1"><stop offset="0" stop-color="#2a86f5"/><stop offset="0.6" stop-color="#0a56d8"/><stop offset="1" stop-color="#0838a8"/></linearGradient>
<linearGradient id="bmg" x1="0" y1="0" x2="0" y2="1"><stop offset="0" stop-color="#7fb0e6"/><stop offset="1" stop-color="#5f90cc"/></linearGradient></defs>
<!-- corner accents -->
<path d="M1 34 H6 L1 39 Z" fill="#2f7ae5"/>
<path d="M1913 34 H1919 V40 Z" fill="#2f7ae5"/>
<path d="M0 913.5 L3.5 917 H0 Z" fill="#2f7ae5"/>
<!-- title icon -->
<path d="M12.5 57 Q14.5 45.5 24 43 Q26.5 42.3 28 42.5 Q25.5 49 27 57 Z" fill="url(#wsg2)" stroke="#9cc0f0" stroke-width="0.5"/>
<path d="M12.6 57 Q18 55 27 56 V57 Z" fill="#a8c8f4"/>
<!-- window buttons -->
<circle cx="1855.6" cy="50" r="8.3" fill="#2b2d34" stroke="#111216" stroke-width="1"/>
<circle cx="1879.4" cy="50" r="8.3" fill="#2b2d34" stroke="#111216" stroke-width="1"/>
<circle cx="1903.5" cy="50" r="8.8" fill="#2a78f2"/>
<path d="M1900 46.5 L1907 53.5 M1907 46.5 L1900 53.5" stroke="#0d0d10" stroke-width="2.2"/>
<!-- bookmark -->
<path d="M15 135.5 H23.3 V149 L19.15 145.5 L15 149 Z" fill="url(#bmg)"/>
<!-- filter right buttons -->
<rect x="1816" y="135" width="14.3" height="14" rx="2.2" fill="#a09f99"/>
<path d="M1818.5 137.5 L1827.8 146.5 M1827.8 137.5 L1818.5 146.5" stroke="#2b2d33" stroke-width="1.3"/>
<rect x="1833.3" y="135" width="23.8" height="14" rx="2.5" fill="#a1a3ab"/>
<path d="M1837.5 140.5 H1847.5 V138 L1853 142 L1847.5 146 V143.5 H1837.5 Z" fill="#2a2c33"/>
<path d="M1864.8 140.2 H1871 L1867.9 143.5 Z" fill="#d4d2cc"/>
<path d="M1888 135.5 V147 M1882.3 141.2 H1893.8" stroke="#ececec" stroke-width="1.6"/>
<!-- status icons -->
<defs><radialGradient id="yg" cx="0.4" cy="0.35" r="0.7"><stop offset="0" stop-color="#eeea90"/><stop offset="1" stop-color="#d8d040"/></radialGradient></defs><circle cx="23" cy="902" r="6.6" fill="url(#yg)"/>
<rect x="40" y="895" width="10" height="14" fill="#eeeeea"/>
<rect x="40" y="895" width="7" height="2.6" fill="#3aa2e2"/>
<path d="M43.5 904.8 L52 896.3" stroke="#3a3a3a" stroke-width="2.3"/><path d="M42.6 905.7 L43.6 904.7" stroke="#111" stroke-width="1.6"/>
<!-- splitter dots -->
<g fill="#6e7076">
<rect x="953" y="522" width="2" height="2"/><rect x="956" y="522" width="2" height="2"/><rect x="959" y="522" width="2" height="2"/><rect x="962" y="522" width="2" height="2"/><rect x="965" y="522" width="2" height="2"/><rect x="968" y="522" width="2" height="2"/>
</g>
<g fill="#6e7076">
<rect x="961" y="701" width="2" height="2"/><rect x="961" y="704" width="2" height="2"/><rect x="961" y="707" width="2" height="2"/><rect x="961" y="710" width="2" height="2"/><rect x="961" y="713" width="2" height="2"/><rect x="961" y="716" width="2" height="2"/>
</g>
<rect x="1868" y="157" width="7" height="1" fill="#2b2d35"/><rect x="1868" y="158" width="7" height="5" fill="#a0a0a0"/><rect x="1868" y="163" width="7" height="2" fill="#e7e6ff"/><rect x="1868" y="165" width="7" height="10" fill="#feffd0"/><rect x="1868" y="175" width="7" height="5" fill="#e7e6ff"/><rect x="1868" y="180" width="7" height="8" fill="#12272e"/><rect x="1868" y="188" width="7" height="11" fill="#feffd0"/><rect x="1868" y="199" width="7" height="2" fill="#e7e6ff"/><rect x="1868" y="201" width="7" height="5" fill="#feffd0"/><rect x="1868" y="206" width="7" height="2" fill="#12272e"/><rect x="1868" y="208" width="7" height="3" fill="#e7e6ff"/><rect x="1868" y="211" width="7" height="10" fill="#feffd0"/><rect x="1868" y="221" width="7" height="3" fill="#a40000"/><rect x="1868" y="224" width="7" height="6" fill="#a0a0a0"/><rect x="1868" y="230" width="7" height="1" fill="#e7e6ff"/><rect x="1868" y="231" width="7" height="6" fill="#a0a0a0"/><rect x="1868" y="237" width="7" height="5" fill="#e7e6ff"/><rect x="1868" y="242" width="7" height="11" fill="#12272e"/><rect x="1868" y="253" width="7" height="3" fill="#a0a0a0"/><rect x="1868" y="256" width="7" height="1" fill="#e7e6ff"/><rect x="1868" y="257" width="7" height="3" fill="#a0a0a0"/><rect x="1868" y="260" width="7" height="2" fill="#e7e6ff"/><rect x="1868" y="262" width="7" height="3" fill="#a0a0a0"/><rect x="1868" y="265" width="7" height="2" fill="#e7e6ff"/><rect x="1868" y="267" width="7" height="3" fill="#a0a0a0"/><rect x="1868" y="270" width="7" height="4" fill="#e7e6ff"/><rect x="1868" y="274" width="7" height="2" fill="#2f7ae5"/><rect x="1868" y="276" width="7" height="8" fill="#daeeff"/><rect x="1868" y="284" width="7" height="3" fill="#feffd0"/><rect x="1868" y="287" width="7" height="13" fill="#daeeff"/><rect x="1868" y="300" width="7" height="4" fill="#a0a0a0"/><rect x="1868" y="304" width="7" height="6" fill="#e7e6ff"/><rect x="1868" y="310" width="7" height="8" fill="#12272e"/><rect x="1868" y="318" width="7" height="3" fill="#a40000"/><rect x="1868" y="321" width="7" height="60" fill="#daeeff"/><rect x="1868" y="381" width="7" height="6" fill="#a0a0a0"/><rect x="1868" y="387" width="7" height="2" fill="#e7e6ff"/><rect x="1868" y="389" width="7" height="6" fill="#a0a0a0"/><rect x="1868" y="395" width="7" height="5" fill="#e7e6ff"/><rect x="1868" y="400" width="7" height="17" fill="#12272e"/><rect x="1868" y="417" width="7" height="3" fill="#a0a0a0"/><rect x="1868" y="420" width="7" height="13" fill="#12272e"/><rect x="1868" y="433" width="7" height="6" fill="#a0a0a0"/><rect x="1868" y="439" width="7" height="7" fill="#12272e"/><rect x="1868" y="446" width="7" height="2" fill="#ffffff"/><rect x="1868" y="448" width="7" height="8" fill="#12272e"/><rect x="1868" y="456" width="7" height="4" fill="#a0a0a0"/><rect x="1868" y="460" width="7" height="5" fill="#e7e6ff"/><rect x="1868" y="465" width="7" height="23" fill="#12272e"/><rect x="1868" y="488" width="7" height="4" fill="#a0a0a0"/><rect x="1868" y="492" width="7" height="7" fill="#e7e6ff"/><rect x="1868" y="499" width="7" height="3" fill="#a0a0a0"/><rect x="1868" y="502" width="7" height="3" fill="#e7e6ff"/><rect x="1868" y="505" width="7" height="3" fill="#a0a0a0"/><rect x="1868" y="508" width="7" height="3" fill="#e7e6ff"/><rect x="1868" y="511" width="7" height="3" fill="#a0a0a0"/><rect x="1868" y="514" width="7" height="3" fill="#e7e6ff"/><rect x="1868" y="517" width="7" height="3" fill="#a0a0a0"/><rect x="1868" y="243" width="6.5" height="10" rx="3" fill="#3f4a50"/>
</svg>

<div class="red" style="left:6px;top:125px;width:239px;height:33px"></div>
<div class="red" style="left:1px;top:413px;width:1873px;height:27px"></div>

</body></html>
